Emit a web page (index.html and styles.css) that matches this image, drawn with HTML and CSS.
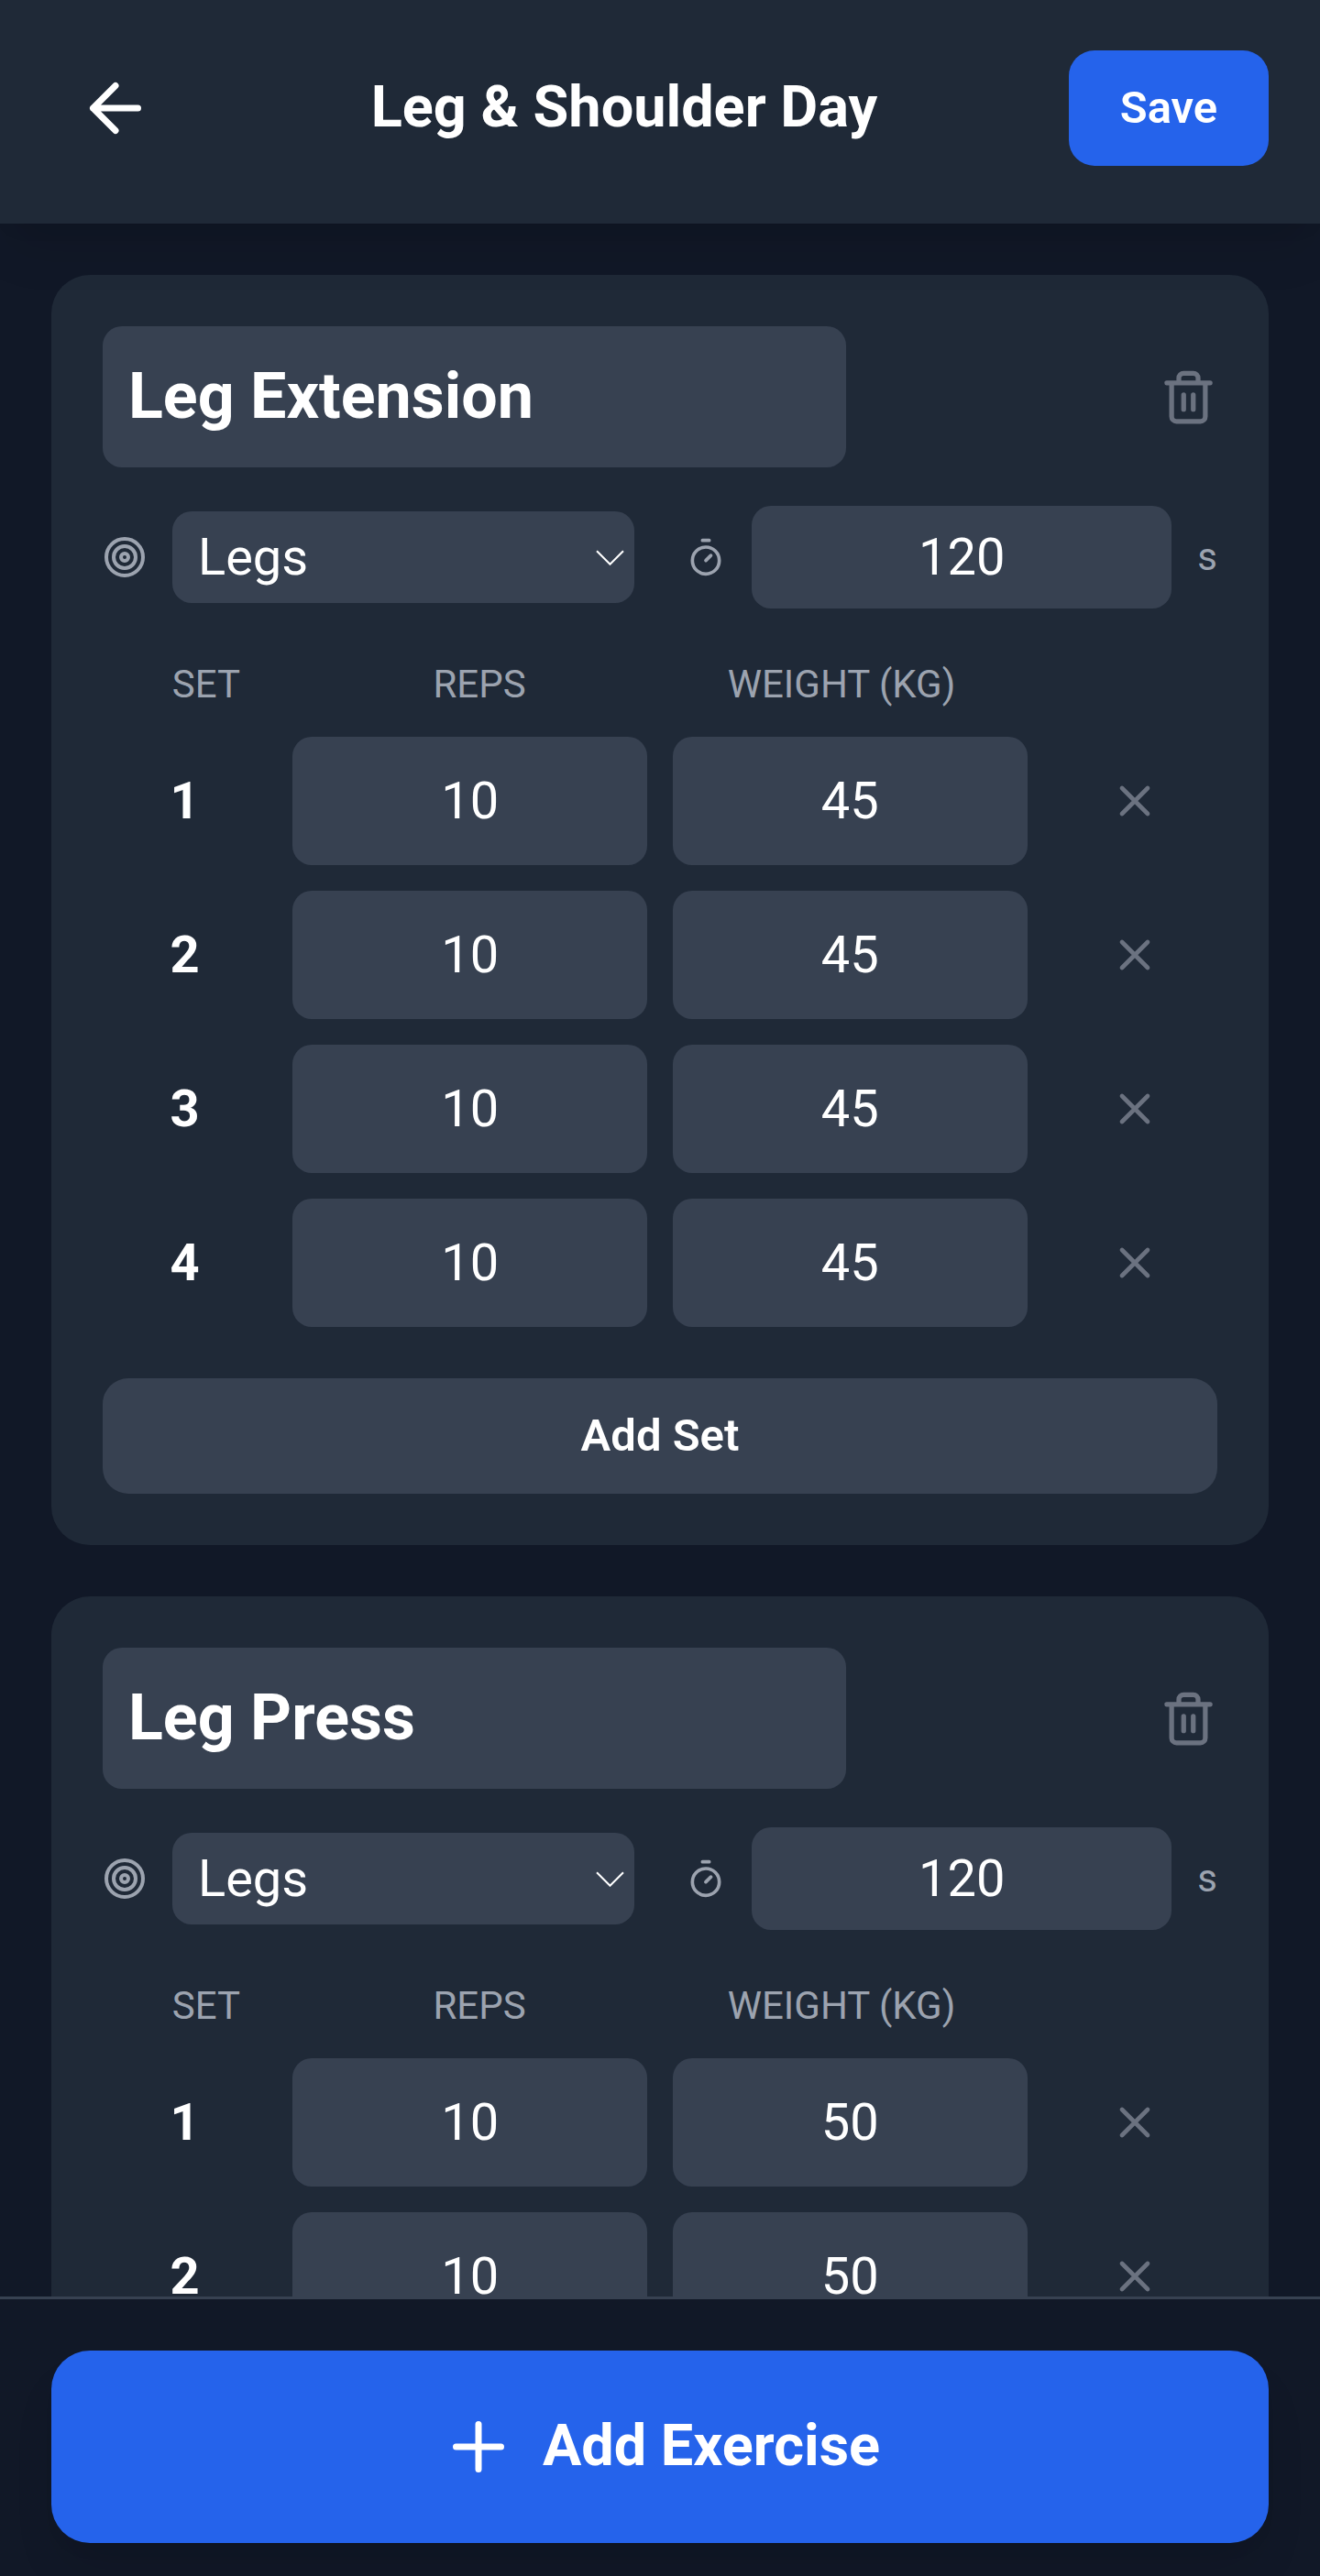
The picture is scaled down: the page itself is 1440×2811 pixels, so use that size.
FILE: index.html
```html
<!DOCTYPE html>
<html lang="en">
<head>
<meta charset="utf-8">
<title>Leg &amp; Shoulder Day</title>
<link rel="stylesheet" href="styles.css">
</head>
<body>
<svg class="sprite" aria-hidden="true">
  <symbol id="back" viewBox="0 0 24 24"><path d="M19 12H5M12 19l-7-7 7-7"/></symbol>
  <symbol id="plus" viewBox="0 0 24 24"><path d="M12 5v14M5 12h14"/></symbol>
  <symbol id="close" viewBox="0 0 24 24"><path d="M18 6 6 18M6 6l12 12"/></symbol>
  <symbol id="trash" viewBox="0 0 24 24"><path d="M3 6h18M19 6v14a2 2 0 0 1-2 2H7a2 2 0 0 1-2-2V6M8 6V4a2 2 0 0 1 2-2h4a2 2 0 0 1 2 2v2M10 11v6M14 11v6"/></symbol>
  <symbol id="target" viewBox="0 0 24 24"><circle cx="12" cy="12" r="10"/><circle cx="12" cy="12" r="6"/><circle cx="12" cy="12" r="2"/></symbol>
  <symbol id="timer" viewBox="0 0 24 24"><path d="M10 2h4M12 14l3-3"/><circle cx="12" cy="14" r="8"/></symbol>
  <symbol id="chevron" viewBox="0 0 30 16"><path d="M1 1l14 14L29 1"/></symbol>
</svg>
<div class="app">
  <header class="topbar">
    <div class="back"><svg class="icon icon-lg"><use href="#back"/></svg></div>
    <h1 class="title">Leg &amp; Shoulder Day</h1>
    <div class="save">Save</div>
  </header>
  <main class="list">
    <section class="card">
      <div class="card-head">
        <div class="field name">Leg Extension</div>
        <svg class="icon icon-trash"><use href="#trash"/></svg>
      </div>
      <div class="meta">
        <div class="meta-item">
          <svg class="icon icon-target"><use href="#target"/></svg>
          <div class="field select"><span>Legs</span><svg class="icon icon-chevron"><use href="#chevron"/></svg></div>
        </div>
        <div class="meta-item">
          <svg class="icon icon-timer"><use href="#timer"/></svg>
          <div class="field rest">120</div>
          <span class="unit">s</span>
        </div>
      </div>
      <div class="labels"><span>SET</span><span>REPS</span><span>WEIGHT (KG)</span></div>
      <div class="sets">
        <div class="set"><b class="num">1</b><div class="field value">10</div><div class="field value">45</div><svg class="icon icon-close"><use href="#close"/></svg></div>
        <div class="set"><b class="num">2</b><div class="field value">10</div><div class="field value">45</div><svg class="icon icon-close"><use href="#close"/></svg></div>
        <div class="set"><b class="num">3</b><div class="field value">10</div><div class="field value">45</div><svg class="icon icon-close"><use href="#close"/></svg></div>
        <div class="set"><b class="num">4</b><div class="field value">10</div><div class="field value">45</div><svg class="icon icon-close"><use href="#close"/></svg></div>
      </div>
      <div class="add-set">Add Set</div>
    </section>
    <section class="card">
      <div class="card-head">
        <div class="field name">Leg Press</div>
        <svg class="icon icon-trash"><use href="#trash"/></svg>
      </div>
      <div class="meta">
        <div class="meta-item">
          <svg class="icon icon-target"><use href="#target"/></svg>
          <div class="field select"><span>Legs</span><svg class="icon icon-chevron"><use href="#chevron"/></svg></div>
        </div>
        <div class="meta-item">
          <svg class="icon icon-timer"><use href="#timer"/></svg>
          <div class="field rest">120</div>
          <span class="unit">s</span>
        </div>
      </div>
      <div class="labels"><span>SET</span><span>REPS</span><span>WEIGHT (KG)</span></div>
      <div class="sets">
        <div class="set"><b class="num">1</b><div class="field value">10</div><div class="field value">50</div><svg class="icon icon-close"><use href="#close"/></svg></div>
        <div class="set"><b class="num">2</b><div class="field value">10</div><div class="field value">50</div><svg class="icon icon-close"><use href="#close"/></svg></div>
      </div>
    </section>
  </main>
  <footer class="bottom">
    <div class="add-exercise"><svg class="icon icon-lg"><use href="#plus"/></svg><span class="add-label">Add Exercise</span></div>
  </footer>
</div>
</body>
</html>
```

FILE: styles.css
```css
* { box-sizing: border-box; }
body { margin: 0; background: #111827; color: #fff; font-family: Roboto, sans-serif; font-size: 56px; line-height: 84px; }
.sprite { display: none; }
.icon { display: block; flex: none; fill: none; stroke: currentColor; stroke-width: 2; stroke-linecap: round; stroke-linejoin: round; }
.icon-lg { width: 84px; height: 84px; }

.app { display: flex; flex-direction: column; height: 2811px; overflow: hidden; }

.topbar { z-index: 1; flex: none; display: flex; align-items: center; justify-content: space-between; height: 244px; padding: 0 56px 8px; background: #1f2937; box-shadow: 0 35px 52px -10px rgba(0, 0, 0, .1), 0 14px 21px -14px rgba(0, 0, 0, .1); }
.back { padding: 28px; }
.title { margin: 0; padding-bottom: 2px; font-size: 63px; font-weight: 700; line-height: 98px; }
.save { width: 218px; padding: 28px 0; border-radius: 28px; background: #2563eb; font-size: 49px; font-weight: 600; line-height: 70px; text-align: center; }

.list { flex: 1; min-height: 0; overflow: hidden; display: flex; flex-direction: column; gap: 56px; padding: 56px 56px 0; }
.card { flex: none; padding: 56px; border-radius: 42px; background: #1f2937; }
.card-head { display: flex; align-items: center; justify-content: space-between; }
.field { border-radius: 21px; background: #374151; }
.name { width: 811px; padding: 27px 28px 29px; font-size: 70px; font-weight: 700; line-height: 98px; }
.icon-trash { width: 63px; height: 63px; color: #6b7280; }

.meta { display: grid; grid-template-columns: 1fr 1fr; gap: 56px; margin-top: 42px; }
.meta-item { display: flex; align-items: center; gap: 28px; color: #9ca3af; }
.meta-item .field { color: #fff; }
.icon-target { width: 48px; height: 48px; }
.icon-timer { width: 44px; height: 44px; }
.select { flex: 1; display: flex; align-items: center; justify-content: space-between; height: 100px; padding: 0 11px 0 28px; }
.icon-chevron { width: 31px; height: 17px; stroke-linecap: butt; stroke-linejoin: miter; }
.rest { flex: 1; height: 112px; line-height: 112px; text-align: center; }
.unit { font-size: 42px; line-height: 56px; }

.labels { display: grid; grid-template-columns: 226px 370px 420px; margin: 55px 0 29px; color: #9ca3af; font-size: 42px; line-height: 56px; text-align: center; }
.sets { display: flex; flex-direction: column; gap: 28px; }
.set { display: grid; grid-template-columns: repeat(12, 1fr); gap: 28px; align-items: center; }
.num { grid-column: span 2; text-align: center; }
.value { grid-column: span 4; height: 140px; line-height: 140px; text-align: center; }
.icon-close { grid-column: span 2; justify-self: center; width: 56px; height: 56px; color: #6b7280; }
.add-set { margin-top: 56px; padding: 28px; border-radius: 28px; background: #374151; font-size: 49px; font-weight: 600; line-height: 70px; text-align: center; }

.bottom { flex: none; height: 305px; padding: 56px 56px 0; border-top: 3px solid #374151; background: #111827; }
.add-exercise { display: flex; align-items: center; justify-content: center; gap: 28px; height: 210px; border-radius: 42px; background: #2563eb; box-shadow: 0 35px 52px -10px rgba(0, 0, 0, .1), 0 14px 21px -14px rgba(0, 0, 0, .1); font-size: 63px; font-weight: 700; line-height: 98px; }
.add-label { padding-bottom: 2px; }
```
